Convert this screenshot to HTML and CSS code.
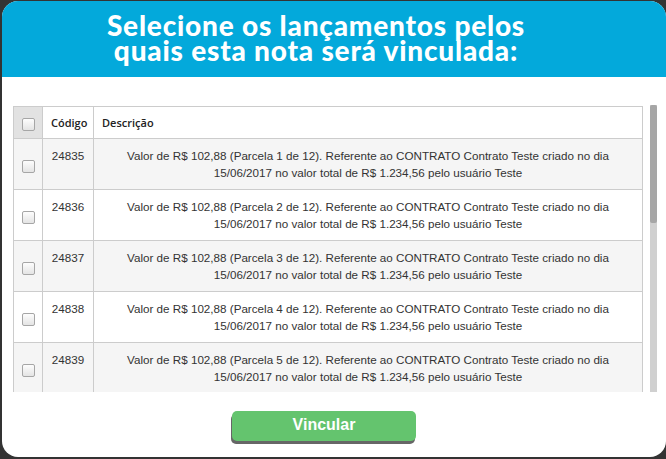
FILE: index.html
```html
<!DOCTYPE html>
<html lang="pt-BR">
<head>
<meta charset="utf-8">
<title>Vincular nota</title>
<link rel="stylesheet" href="styles.css">
</head>
<body>
<div class="modal">
  <div class="modal-header">
    <h1 class="title">Selecione os lançamentos pelos<br>quais esta nota será vinculada:</h1>
  </div>
  <div class="modal-body">
    <div class="scroll">
      <table class="grid">
        <thead>
          <tr>
            <th class="col-check"><span class="check"></span></th>
            <th class="col-code">Código</th>
            <th class="col-desc">Descrição</th>
          </tr>
        </thead>
        <tbody>
          <tr class="odd"><td class="col-check"><span class="check"></span></td><td class="col-code">24835</td><td class="col-desc">Valor de R$ 102,88 (Parcela 1 de 12). Referente ao CONTRATO Contrato Teste criado no dia 15/06/2017 no valor total de R$ 1.234,56 pelo usuário Teste</td></tr>
          <tr><td class="col-check"><span class="check"></span></td><td class="col-code">24836</td><td class="col-desc">Valor de R$ 102,88 (Parcela 2 de 12). Referente ao CONTRATO Contrato Teste criado no dia 15/06/2017 no valor total de R$ 1.234,56 pelo usuário Teste</td></tr>
          <tr class="odd"><td class="col-check"><span class="check"></span></td><td class="col-code">24837</td><td class="col-desc">Valor de R$ 102,88 (Parcela 3 de 12). Referente ao CONTRATO Contrato Teste criado no dia 15/06/2017 no valor total de R$ 1.234,56 pelo usuário Teste</td></tr>
          <tr><td class="col-check"><span class="check"></span></td><td class="col-code">24838</td><td class="col-desc">Valor de R$ 102,88 (Parcela 4 de 12). Referente ao CONTRATO Contrato Teste criado no dia 15/06/2017 no valor total de R$ 1.234,56 pelo usuário Teste</td></tr>
          <tr class="odd"><td class="col-check"><span class="check"></span></td><td class="col-code">24839</td><td class="col-desc">Valor de R$ 102,88 (Parcela 5 de 12). Referente ao CONTRATO Contrato Teste criado no dia 15/06/2017 no valor total de R$ 1.234,56 pelo usuário Teste</td></tr>
          <tr><td class="col-check"><span class="check"></span></td><td class="col-code">24840</td><td class="col-desc">Valor de R$ 102,88 (Parcela 6 de 12). Referente ao CONTRATO Contrato Teste criado no dia 15/06/2017 no valor total de R$ 1.234,56 pelo usuário Teste</td></tr>
          <tr class="odd"><td class="col-check"><span class="check"></span></td><td class="col-code">24841</td><td class="col-desc">Valor de R$ 102,88 (Parcela 7 de 12). Referente ao CONTRATO Contrato Teste criado no dia 15/06/2017 no valor total de R$ 1.234,56 pelo usuário Teste</td></tr>
          <tr><td class="col-check"><span class="check"></span></td><td class="col-code">24842</td><td class="col-desc">Valor de R$ 102,88 (Parcela 8 de 12). Referente ao CONTRATO Contrato Teste criado no dia 15/06/2017 no valor total de R$ 1.234,56 pelo usuário Teste</td></tr>
        </tbody>
      </table>
    </div>
    <div class="scrollbar"><div class="thumb"></div></div>
  </div>
  <div class="modal-footer">
    <button class="btn-vincular" type="button">Vincular</button>
  </div>
</div>
</body>
</html>
```

FILE: styles.css
```css
html, body {
  margin: 0;
  padding: 0;
}
body {
  background: #333333;
  width: 666px;
  height: 459px;
  overflow: hidden;
  font-family: "Liberation Sans", Arial, sans-serif;
}
.modal {
  margin: 1px 0 0 2px;
  width: 664px;
  height: 456px;
  background: #ffffff;
  border-radius: 16px;
  overflow: hidden;
  display: flex;
  flex-direction: column;
}
.modal-header {
  height: 76px;
  background: #03a9db;
  display: flex;
  align-items: center;
  justify-content: center;
  padding-right: 36px;
  flex: none;
}
.title {
  margin: 0;
  color: #ffffff;
  font-family: "Lato", "Open Sans", sans-serif;
  font-weight: 900;
  font-size: 28px;
  letter-spacing: 0.8px;
  line-height: 25px;
  text-align: center;
  padding-bottom: 2px;
}
.modal-body {
  padding: 29px 0 0 11px;
  flex: none;
  display: flex;
  align-items: flex-start;
  gap: 7px;
}
.scroll {
  width: 630px;
  height: 286px;
  overflow: hidden;
}
.scrollbar {
  width: 7px;
  height: 287px;
  margin-top: -1px;
  background: #d0d0d0;
}
.thumb {
  height: 118px;
  background: #a6a6a6;
  border-radius: 2px;
}
.grid {
  width: 630px;
  table-layout: fixed;
  border-collapse: collapse;
  font-size: 11.65px;
  line-height: 17px;
  color: #333333;
}
.grid th,
.grid td {
  border: 1px solid #cccccc;
}
.grid th {
  font-family: "Open Sans", sans-serif;
  font-size: 11px;
  font-weight: 600;
  color: #222222;
  text-align: left;
  height: 31px;
  padding: 0 8px;
  background: #ffffff;
  white-space: nowrap;
}
.grid th.col-check {
  background: #e2e2e2;
  padding: 0;
  text-align: center;
  width: 28px;
}
.grid th.col-code {
  width: 42px;
  padding-left: 8px;
  padding-right: 0;
}
.grid td {
  padding: 8px;
  vertical-align: top;
  text-align: center;
  height: 34px;
}
.grid tr.odd td {
  background: #f5f5f5;
}
.grid td.col-check {
  padding: 0;
  vertical-align: middle;
}
.grid td.col-code {
  padding-left: 2px;
  padding-right: 2px;
}
.check {
  display: inline-block;
  width: 11px;
  height: 11px;
  border: 1px solid #a6a6a6;
  border-radius: 2px;
  background: linear-gradient(#fdfdfd, #e4e4e4);
  vertical-align: middle;
  margin-top: 3px;
}
.grid th .check {
  margin-top: 0;
}
.modal-footer {
  flex: none;
  display: flex;
  justify-content: center;
  padding: 19px 20px 0 0;
}
.btn-vincular {
  width: 184px;
  height: 30px;
  border: none;
  border-radius: 5px;
  background: #64c46e;
  box-shadow: -1px 3px 0 #666666;
  color: #ffffff;
  font-family: "Liberation Sans", Arial, sans-serif;
  font-weight: 700;
  font-size: 16px;
  padding: 0 0 2px 0;
  cursor: pointer;
}
```
